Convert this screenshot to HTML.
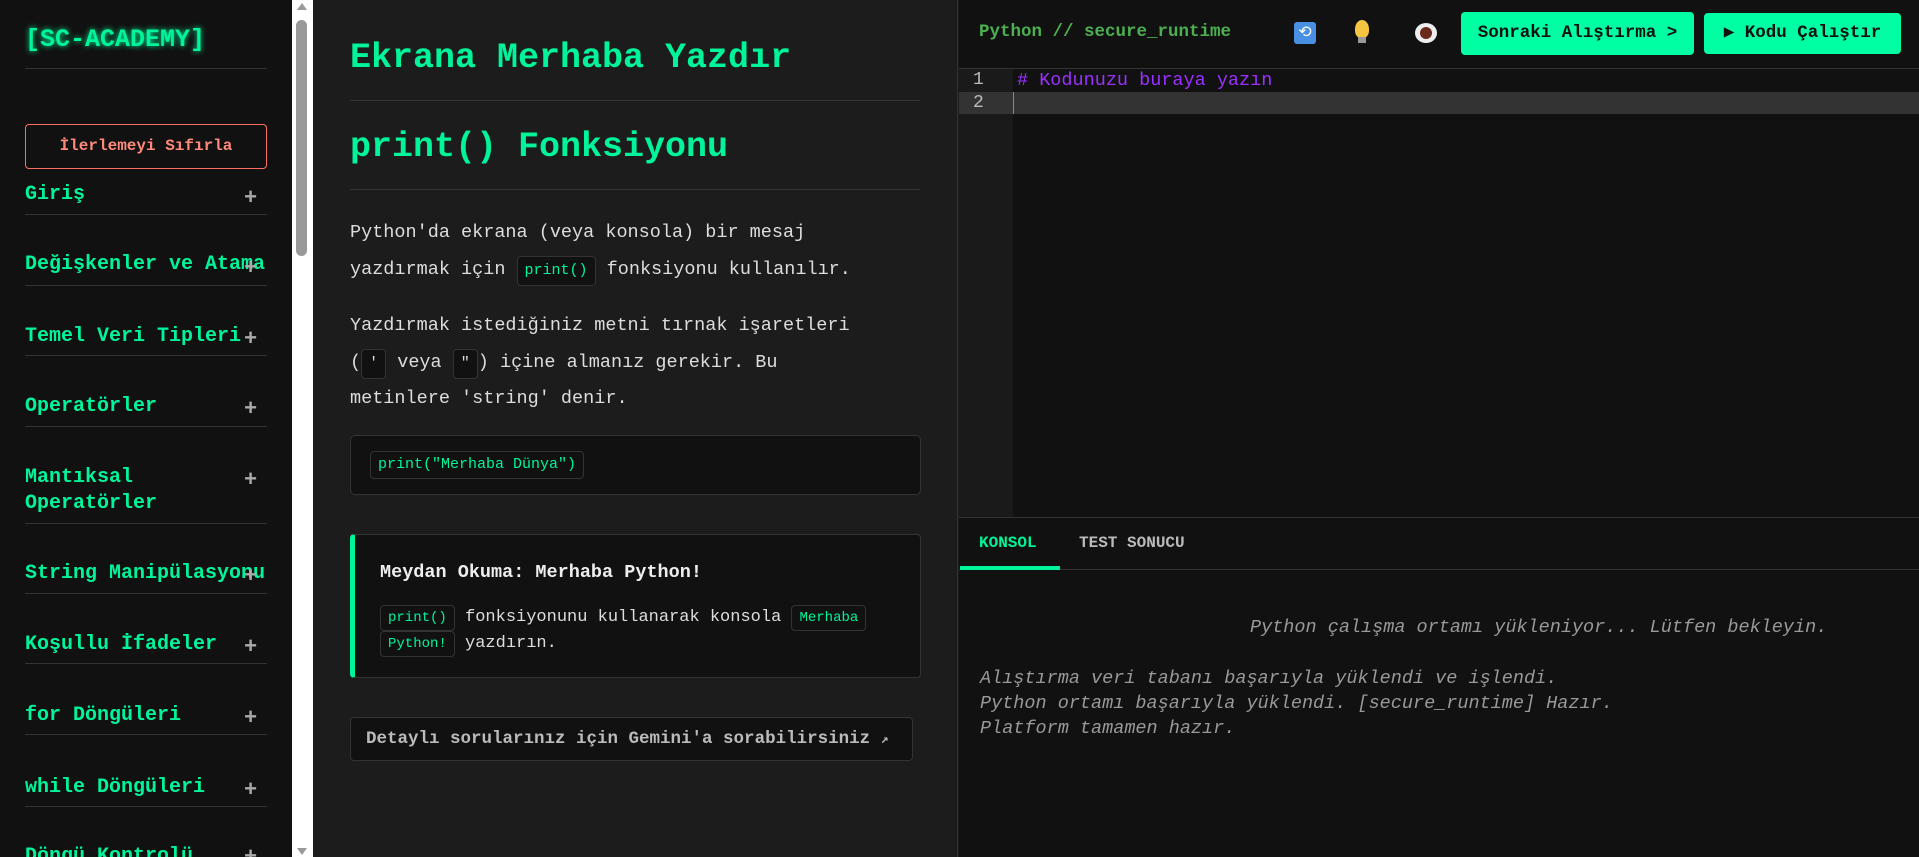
<!DOCTYPE html>
<html style="overflow:hidden"><head><meta charset="utf-8"><style>
*{margin:0;padding:0;box-sizing:border-box}
html,body{width:1919px;height:857px;overflow:hidden}
body{background:#1c1c1c;font-family:"Liberation Mono","DejaVu Sans Mono",monospace}
#wrap{position:relative;width:1919px;height:857px;overflow:hidden}
.a{position:absolute;white-space:nowrap}
#side{position:absolute;left:0;top:0;width:292px;height:857px;background:#111;overflow:hidden}
#sb{position:absolute;left:292px;top:0;width:21px;height:857px;background:#fff}
#thumb{position:absolute;left:296px;top:20px;width:11px;height:236px;background:#999;border-radius:6px}
.g{color:#00f59a}
.nav{position:absolute;left:25px;width:242px;font-size:20px;font-weight:bold;color:#00f59a}
.ln{position:absolute;left:25px;width:242px;height:1px;background:#333}
.plus{position:absolute;left:244px;font-size:22px;color:#aaa;font-weight:bold}
#main{position:absolute;left:313px;top:0;width:645px;height:857px;background:#1c1c1c;border-right:1px solid #333}
.chip{display:inline-block;border:1px solid #333;background:#111;border-radius:4px;color:#00f59a;padding:0 7px;line-height:28px}
#right{position:absolute;left:959px;top:0;width:960px;height:857px;background:#111;overflow:hidden}
.btn{position:absolute;background:#00ffa3;color:#111;font-weight:bold;font-size:17.5px;border-radius:4px;text-align:center}
</style></head><body><div id="wrap">
<div id="side">
<div class="a g" style="left:25px;top:25px;font-size:25px;font-weight:bold;text-shadow:0 0 6px #00f59a">[SC-ACADEMY]</div>
<div class="ln" style="top:68px"></div>
<div class="a" style="left:25px;top:124px;width:242px;height:45px;border:1px solid #ff6f61;border-radius:4px;color:#ff8a7a;font-size:16px;font-weight:bold;text-align:center;line-height:43px">İlerlemeyi Sıfırla</div>
<div class="nav" style="top:183px">Giriş</div><div class="plus" style="top:186px">+</div><div class="ln" style="top:214px"></div>
<div class="nav" style="top:253px;overflow:hidden;white-space:nowrap">Değişkenler ve Atama</div><div class="plus" style="top:256px">+</div><div class="ln" style="top:285px"></div>
<div class="nav" style="top:325px">Temel Veri Tipleri</div><div class="plus" style="top:327px">+</div><div class="ln" style="top:355px"></div>
<div class="nav" style="top:395px">Operatörler</div><div class="plus" style="top:397px">+</div><div class="ln" style="top:426px"></div>
<div class="nav" style="top:465px;line-height:26px">Mantıksal<br>Operatörler</div><div class="plus" style="top:468px">+</div><div class="ln" style="top:523px"></div>
<div class="nav" style="top:562px;white-space:nowrap;overflow:hidden">String Manipülasyonu</div><div class="plus" style="top:564px">+</div><div class="ln" style="top:593px"></div>
<div class="nav" style="top:633px">Koşullu İfadeler</div><div class="plus" style="top:635px">+</div><div class="ln" style="top:663px"></div>
<div class="nav" style="top:704px">for Döngüleri</div><div class="plus" style="top:706px">+</div><div class="ln" style="top:734px"></div>
<div class="nav" style="top:776px">while Döngüleri</div><div class="plus" style="top:778px">+</div><div class="ln" style="top:806px"></div>
<div class="nav" style="top:845px">Döngü Kontrolü</div><div class="plus" style="top:845px">+</div>
</div>
<div id="sb"></div><div id="thumb"></div>
<div class="a" style="left:297px;top:3px;width:0;height:0;border-left:5px solid transparent;border-right:5px solid transparent;border-bottom:7px solid #999"></div>
<div class="a" style="left:297px;top:848px;width:0;height:0;border-left:5px solid transparent;border-right:5px solid transparent;border-top:7px solid #999"></div>
<div id="main"></div>
<div class="a g" style="left:350px;top:38px;font-size:35px;font-weight:bold">Ekrana Merhaba Yazdır</div>
<div class="a" style="left:350px;top:100px;width:570px;height:1px;background:#333"></div>
<div class="a g" style="left:350px;top:127px;font-size:35px;font-weight:bold">print() Fonksiyonu</div>
<div class="a" style="left:350px;top:189px;width:570px;height:1px;background:#333"></div>
<div class="a" style="left:350px;top:215px;color:#ddd;font-size:18.5px;line-height:36.5px">Python'da ekrana (veya konsola) bir mesaj<br>yazdırmak için <span class="chip" style="font-size:15px">print()</span> fonksiyonu kullanılır.</div>
<div class="a" style="left:350px;top:308px;color:#ddd;font-size:18.5px;line-height:36.5px">Yazdırmak istediğiniz metni tırnak işaretleri<br>(<span class="chip" style="font-size:15px;color:#ddd">'</span> veya <span class="chip" style="font-size:15px;color:#ddd">"</span>) içine almanız gerekir. Bu<br>metinlere 'string' denir.</div>
<div class="a" style="left:350px;top:435px;width:571px;height:60px;background:#111;border:1px solid #333;border-radius:5px"></div>
<div class="a chip" style="left:370px;top:451px;font-size:15px;line-height:26px">print("Merhaba Dünya")</div>
<div class="a" style="left:350px;top:534px;width:571px;height:144px;background:#111;border:1px solid #333;border-left:5px solid #00f59a;border-radius:4px"></div>
<div class="a" style="left:380px;top:562px;color:#eee;font-size:18.5px;font-weight:bold">Meydan Okuma: Merhaba Python!</div>
<div class="a" style="left:380px;top:605px;color:#ddd;font-size:17px;line-height:24px">
<span class="chip" style="font-size:14px;line-height:24px">print()</span> fonksiyonunu kullanarak konsola <span class="chip" style="font-size:14px;line-height:24px">Merhaba</span><br><span class="chip" style="font-size:14px;line-height:24px">Python!</span> yazdırın.</div>
<div class="a" style="left:350px;top:717px;width:563px;height:44px;background:#111;border:1px solid #333;border-radius:4px;color:#bbb;font-size:17.5px;font-weight:bold;line-height:42px;padding-left:15px">Detaylı sorularınız için Gemini'a sorabilirsiniz <span style="font-size:13px">↗</span></div>
<div id="right">
<div class="a" style="left:20px;top:22px;color:#4caf50;font-size:17.5px;font-weight:bold">Python // secure_runtime</div>
<div class="a" style="left:335px;top:22px;width:22px;height:22px;background:#4a90e2;border-radius:3px;color:#fff;font-size:16px;text-align:center;line-height:22px">⟲</div>
<div class="a" style="left:396px;top:20px;width:14px;height:18px;background:#f5c542;border-radius:50% 50% 40% 40%"></div><div class="a" style="left:399px;top:37px;width:8px;height:6px;background:#999"></div>
<div class="a" style="left:456px;top:23px;width:22px;height:20px;background:#eee;border-radius:50%"></div><div class="a" style="left:461px;top:27px;width:12px;height:12px;background:#6b2a1a;border-radius:50%"></div>
<div class="btn" style="left:502px;top:12px;width:233px;height:43px;line-height:43px">Sonraki Alıştırma &gt;</div>
<div class="btn" style="left:745px;top:13px;width:197px;height:41px;line-height:41px">▶ Kodu Çalıştır</div>
<div class="a" style="left:0;top:68px;width:960px;height:1px;background:#333"></div>
<div class="a" style="left:0;top:69px;width:54px;height:449px;background:#1a1a1a"></div>
<div class="a" style="left:0;top:92px;width:960px;height:22px;background:#333"></div>
<div class="a" style="left:54px;top:92px;width:1px;height:22px;background:#888"></div>
<div class="a" style="left:14px;top:69px;color:#bbb;font-size:18px;line-height:23px">1<br>2</div>
<div class="a" style="left:58px;top:69px;color:#9b30ff;font-size:18.5px;line-height:23px"># Kodunuzu buraya yazın</div>
<div class="a" style="left:0;top:517px;width:960px;height:1px;background:#333"></div>
<div class="a" style="left:0;top:569px;width:960px;height:1px;background:#333"></div>
<div class="a" style="left:1px;top:566px;width:100px;height:4px;background:#00f59a"></div>
<div class="a" style="left:20px;top:534px;color:#00f59a;font-size:16px;font-weight:bold">KONSOL</div>
<div class="a" style="left:120px;top:534px;color:#bbb;font-size:16px;font-weight:bold">TEST SONUCU</div>
<div class="a" style="left:291px;top:617px;color:#999;font-size:18.5px;font-style:italic">Python çalışma ortamı yükleniyor... Lütfen bekleyin.</div>
<div class="a" style="left:21px;top:666px;color:#999;font-size:18.5px;font-style:italic;line-height:25px">Alıştırma veri tabanı başarıyla yüklendi ve işlendi.<br>Python ortamı başarıyla yüklendi. [secure_runtime] Hazır.<br>Platform tamamen hazır.</div>
</div>
</div></body></html>
